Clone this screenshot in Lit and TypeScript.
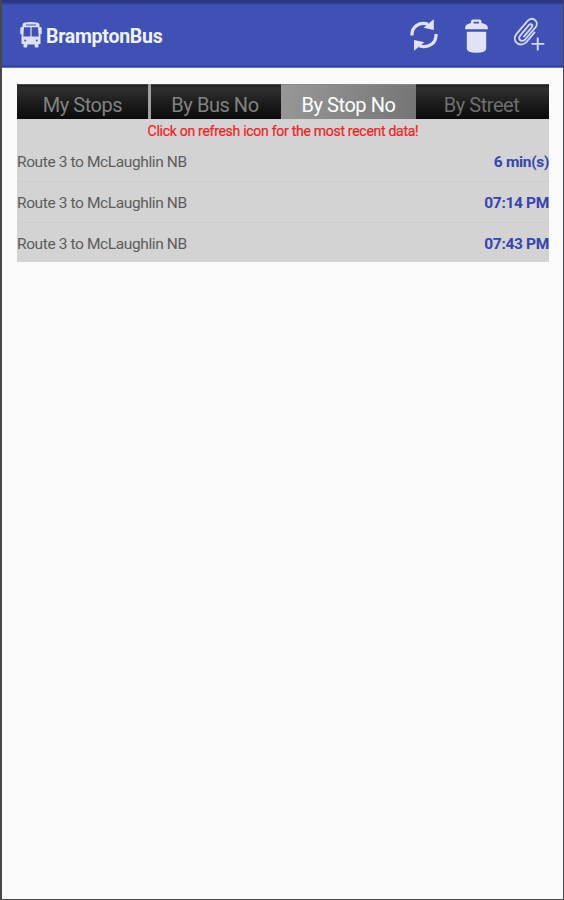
import { LitElement, html, css } from "lit";
import { customElement, property, state } from "lit/decorators.js";
import { classMap } from "lit/directives/class-map.js";

@customElement("app-bar")
class AppBar extends LitElement {
  static styles = css`
    :host { display: block; }
    .bar {
      box-sizing: border-box;
      height: 68px;
      padding: 5px 18px 0 18px;
      display: flex;
      align-items: center;
      color: #f0f2ff;
      background: linear-gradient(#29357c 0, #2f3c90 3px, #3f51b5 5px, #3f51b5 65px, #2e3da6 66px, #3546ab 67px, #8f98cf 68px);
    }
    .bus { width: 22px; height: 26px; margin: 0 4px 3px 0; }
    h1 { margin: 0; flex: 1; font: 700 19.5px/24px Roboto, sans-serif; letter-spacing: -0.25px; }
    .actions { display: flex; align-items: center; }
    .refresh { width: 28px; height: 34px; margin: 0 27px 3px 0; }
    .trash { width: 23px; height: 34px; margin: 0 26px 2px 0; }
    .clip { width: 31px; height: 35px; margin-bottom: 4px; }
    svg { display: block; }
  `;
  render() {
    return html`
      <header class="bar">
        <svg class="bus" viewBox="0 0 22 26" fill="#dce0f4">
          <path fill-rule="evenodd" d="M4 .7Q11-.7 18 .7Q19.5 1 19.5 3V5H20.5Q21.7 5 21.7 6.5V12H20.5V22H18.5V24.6Q18.5 25.5 17.5 25.5H15.7Q14.7 25.5 14.7 24.6V22.5H7.3V24.6Q7.3 25.5 6.3 25.5H4.5Q3.5 25.5 3.5 24.6V22H1.5V12H.3V6.5Q.3 5 1.5 5H2.5V3Q2.5 1 4 .7ZM6 2.4V3.4H16V2.4ZM4 5.3L3.3 14.5H10.4V5.3ZM11.6 5.3V14.5H18.7L18 5.3ZM5.2 17.6A1 1 0 1 0 5.2 19.6A1 1 0 1 0 5.2 17.6ZM16.8 17.6A1 1 0 1 0 16.8 19.6A1 1 0 1 0 16.8 17.6Z"/>
        </svg>
        <h1>BramptonBus</h1>
        <div class="actions">
          <svg class="refresh" viewBox="0 0 28 34" fill="none" stroke="#e0e3f5" stroke-width="3.2">
            <path d="M2 17.5C1.5 9 9 3.5 18 6.2"/>
            <path d="M26 16C26.6 25 19 30.5 9.5 28"/>
            <path d="M23.8 1.2V12L13.5 9.8Z" fill="#e0e3f5" stroke="none"/>
            <path d="M4 32.7V22L14.5 24.2Z" fill="#e0e3f5" stroke="none"/>
          </svg>
          <svg class="trash" viewBox="0 0 23 34" fill="#e0e3f5">
            <path fill-rule="evenodd" d="M6 4V2.4Q6 .5 8 .5H14.5Q16.5.5 16.5 2.4V4Q22.8 5 22.8 8.5V10.3H.2V8.5Q.2 5 6 4ZM8.6 2.8V4.6H14V2.8Z"/>
            <path d="M1.8 12.7H21.2V29.5Q21.2 33.7 11.5 33.7T1.8 29.5Z"/>
          </svg>
          <svg class="clip" viewBox="0 0 32 36" fill="none" stroke="#d3d8f2" stroke-width="1.9" stroke-linecap="round">
            <path d="M21.2 15.8L12.6 26.1C5.7 31.7-2.6 24.8 2.2 17.9L13.8 4.1C19-1.5 26.6 4.6 22.3 10.5L11.6 23.1C7.6 26.5 3.6 23 6.4 19.2L15.3 8.4C17.6 6.2 20 8.2 18.3 10.6L10.2 20.1"/>
            <path d="M24.5 21V34.5M18 27.7H31.3" stroke-width="2" stroke-linecap="butt"/>
          </svg>
        </div>
      </header>
    `;
  }
}

@customElement("tab-strip")
class TabStrip extends LitElement {
  @property({ attribute: false }) tabs: string[] = [];
  @property({ type: Number }) selected = 0;
  static styles = css`
    :host { display: block; }
    .tabs {
      display: grid;
      grid-template-columns: 133px 131px 135px 133px;
      height: 35px;
      background: #a0a0a0;
    }
    .tab {
      box-sizing: border-box;
      margin: 0 0 1px;
      border: 0;
      border-top: 1px solid #4a4a4a;
      padding: 7px 0 0;
      text-align: center;
      white-space: nowrap;
      font: 400 20px/27px Roboto, sans-serif;
      letter-spacing: -0.45px;
      color: #828282;
      background: linear-gradient(#1d1d1d, #303030 3px, #191919 60%, #0c0c0c);
    }
    .tab:nth-child(1) { margin-right: 2px; }
    .tab:nth-child(2) { margin-left: 1px; padding-right: 2px; }
    .tab:nth-child(4) { color: #6f6f6f; padding-right: 2px; }
    .tab.on {
      color: #fff;
      border-top-color: #888;
      background: linear-gradient(105deg, #989898, #858585 55%, #747474);
    }
  `;
  render() {
    return html`<nav class="tabs">
      ${this.tabs.map((t, i) => html`<button class=${classMap({ tab: true, on: i === this.selected })}
        @click=${() => this.dispatchEvent(new CustomEvent("pick", { detail: i }))}>${t}</button>`)}
    </nav>`;
  }
}

interface Arrival { route: string; time: string; }

@customElement("app-root")
class AppRoot extends LitElement {
  @state() private selected = 2;
  private tabs = ["My Stops", "By Bus No", "By Stop No", "By Street"];
  private arrivals: Arrival[] = [
    { route: "Route 3 to McLaughlin NB", time: "6 min(s)" },
    { route: "Route 3 to McLaughlin NB", time: "07:14 PM" },
    { route: "Route 3 to McLaughlin NB", time: "07:43 PM" },
  ];
  static styles = css`
    :host {
      display: block;
      box-sizing: border-box;
      height: 900px;
      border: solid #48484a;
      border-width: 0 1px 1px 2px;
      background: #fafafa;
      font-family: Roboto, sans-serif;
    }
    .panel { margin: 16px 14px 0 15px; width: 532px; background: #d3d3d3; }
    .notice {
      margin: 0;
      height: 22px;
      text-align: center;
      font-size: 14px;
      line-height: 24px;
      letter-spacing: -0.28px;
      color: #f5201f;
      -webkit-text-stroke: 0.2px #f5201f;
    }
    .rows { margin: 0; padding: 0; list-style: none; }
    .row {
      box-sizing: border-box;
      height: 41px;
      padding-top: 2px;
      display: flex;
      justify-content: space-between;
      align-items: center;
      font-size: 15.5px;
      letter-spacing: -0.39px;
      color: #5c5c5c;
      border-bottom: 1px solid #cdcdcd;
    }
    .row:last-child { border-bottom: 0; height: 39px; }
    .time { font-weight: 700; letter-spacing: -0.33px; color: #3545b0; }
  `;
  render() {
    return html`
      <app-bar></app-bar>
      <main class="panel">
        <tab-strip .tabs=${this.tabs} .selected=${this.selected}
          @pick=${(e: CustomEvent<number>) => (this.selected = e.detail)}></tab-strip>
        <p class="notice">Click on refresh icon for the most recent data!</p>
        <ul class="rows">
          ${this.arrivals.map((a) => html`<li class="row">
            <span class="route">${a.route}</span><span class="time">${a.time}</span>
          </li>`)}
        </ul>
      </main>
    `;
  }
}
